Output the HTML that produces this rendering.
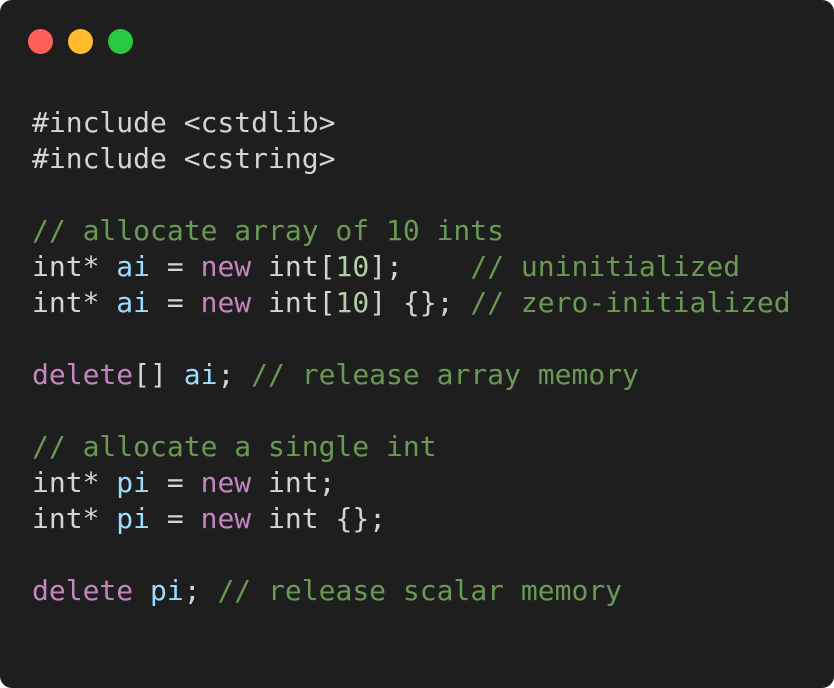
<!DOCTYPE html>
<html><head><meta charset="utf-8"><style>
html,body{margin:0;padding:0;background:#fff;width:834px;height:688px;overflow:hidden}
.win{position:absolute;left:0;top:0;width:834px;height:688px;background:#1e1e1e;border-radius:12px}
.dot{position:absolute;top:29px;width:25px;height:25px;border-radius:50%}
pre{position:absolute;left:32px;top:105px;margin:0;font-family:"DejaVu Sans Mono","Liberation Mono",monospace;font-size:28px;line-height:36px;color:#d4d4d4;white-space:pre}
.c{color:#6a9955}.k{color:#c586c0}.v{color:#9cdcfe}.n{color:#b5cea8}
</style></head><body>
<div class="win">
<div class="dot" style="left:28px;background:#ff5f57"></div>
<div class="dot" style="left:68px;background:#febc2e"></div>
<div class="dot" style="left:108px;background:#28c840"></div>
<pre>#include &lt;cstdlib&gt;
#include &lt;cstring&gt;

<span class="c">// allocate array of 10 ints</span>
int* <span class="v">ai</span> = <span class="k">new</span> int[<span class="n">10</span>];    <span class="c">// uninitialized</span>
int* <span class="v">ai</span> = <span class="k">new</span> int[<span class="n">10</span>] {}; <span class="c">// zero-initialized</span>

<span class="k">delete</span>[] <span class="v">ai</span>; <span class="c">// release array memory</span>

<span class="c">// allocate a single int</span>
int* <span class="v">pi</span> = <span class="k">new</span> int;
int* <span class="v">pi</span> = <span class="k">new</span> int {};

<span class="k">delete</span> <span class="v">pi</span>; <span class="c">// release scalar memory</span></pre>
</div>
</body></html>
